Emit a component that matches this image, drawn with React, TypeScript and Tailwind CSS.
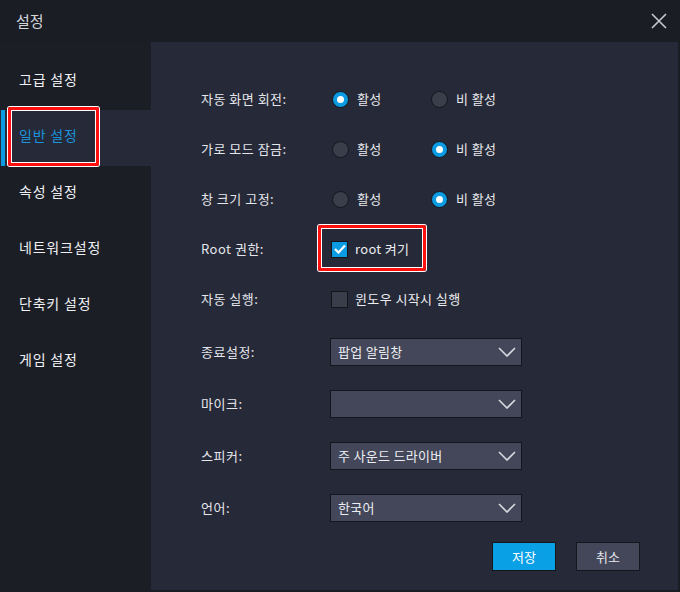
import React from "react";

const font = { fontFamily: '"Noto Sans CJK KR", "Noto Sans", sans-serif' };

function Radio({ on }: { on: boolean }) {
  return on ? (
    <span className="w-[17px] h-[17px] rounded-full bg-[#0a9be3] border border-[#14161c] flex items-center justify-center shrink-0">
      <span className="w-[7px] h-[7px] rounded-full bg-white" />
    </span>
  ) : (
    <span className="w-[17px] h-[17px] rounded-full bg-[#3a3d4a] border border-[#14161c] shrink-0" />
  );
}

function RadioRow({ label, first }: { label: string; first: boolean }) {
  return (
    <div className="h-[50px] flex items-center">
      <div className="w-[131px] text-[13px] tracking-[0.5px] text-[#e4e6ec]">{label}</div>
      <div className="w-[99px] flex items-center gap-[8px]">
        <Radio on={first} />
        <span className="text-[13px] tracking-[0.4px] text-[#e8e9ee]">활성</span>
      </div>
      <div className="flex items-center gap-[8px]">
        <Radio on={!first} />
        <span className="text-[13px] tracking-[0.4px] text-[#e8e9ee]">비 활성</span>
      </div>
    </div>
  );
}

function Chevron() {
  return (
    <svg width="18" height="10" viewBox="0 0 18 10" fill="none">
      <path d="M1 1 L9 9 L17 1" stroke="#d8dae0" strokeWidth="1.6" />
    </svg>
  );
}

function SelectRow({ label, value }: { label: string; value: string }) {
  return (
    <div className="h-[52px] flex items-center">
      <div className="w-[129px] text-[13px] tracking-[0.5px] text-[#e4e6ec]">{label}</div>
      <div className="w-[192px] h-[28px] bg-[#434759] border border-[#14161c] flex items-center justify-between pl-[7px] pr-[5px]">
        <span className="text-[13px] tracking-[0.3px] text-[#eceef2]">{value}</span>
        <Chevron />
      </div>
    </div>
  );
}

export default function App() {
  const items = ["고급 설정", "일반 설정", "속성 설정", "네트워크설정", "단축키 설정", "게임 설정"];
  return (
    <div style={font} className="w-[680px] h-[592px] bg-[#1b1d24] flex flex-col overflow-hidden">
      <div className="h-[42px] flex items-center justify-between pl-[16px] pr-[13px] shrink-0">
        <span className="text-[15px] text-[#d4d6dc]">설정</span>
        <svg width="16" height="16" viewBox="0 0 16 16">
          <path d="M1 1 L15 15 M15 1 L1 15" stroke="#c8cad0" strokeWidth="1.6" />
        </svg>
      </div>
      <div className="flex flex-1">
        <div className="w-[151px] bg-[#1c1e26] pt-[12px] flex flex-col">
          {items.map((t, i) => {
            const sel = i === 1;
            return (
              <div
                key={t}
                className={
                  "relative h-[56px] flex items-center pl-[19px] pb-[6px] text-[14px] tracking-[0.8px] " +
                  (sel ? "bg-[#262937] text-[#1a93dc]" : "text-[#eef0f4]")
                }
              >
                {sel && <span className="absolute left-[1px] top-0 bottom-0 w-[4px] bg-[#0a9be3]" />}
                {sel && (
                  <span className="absolute left-[8px] top-[-3px] w-[91px] h-[59px] border-[3px] border-[#ff1010] rounded-[2px] shadow-[0_0_0_1px_#ffffff,inset_0_0_0_1px_#ffffff]" />
                )}
                {t}
              </div>
            );
          })}
        </div>
        <div className="w-[527px] h-[548px] bg-[#262937] pl-[50px] pt-[32px] flex flex-col">
          <RadioRow label="자동 화면 회전:" first={true} />
          <RadioRow label="가로 모드 잠금:" first={false} />
          <RadioRow label="창 크기 고정:" first={false} />
          <div className="h-[50px] flex items-center">
            <div className="w-[130px] text-[13px] tracking-[0.5px] text-[#e4e6ec]">Root 권한:</div>
            <div className="relative flex items-center gap-[7px]">
              <span className="absolute left-[-13px] top-[-14px] w-[108px] h-[46px] border-[3px] border-[#ff1010] rounded-[2px] shadow-[0_0_0_1px_#ffffff,inset_0_0_0_1px_#ffffff]" />
              <span className="w-[17px] h-[17px] bg-[#0a9be3] border border-[#14161c] flex items-center justify-center">
                <svg width="12" height="10" viewBox="0 0 12 10">
                  <path d="M1 5 L4.5 8.5 L11 1.5" stroke="#fff" strokeWidth="2.2" fill="none" />
                </svg>
              </span>
              <span className="text-[13px] tracking-[0.3px] text-[#eceef2]">root 켜기</span>
            </div>
          </div>
          <div className="h-[50px] flex items-center">
            <div className="w-[130px] text-[13px] tracking-[0.5px] text-[#e4e6ec]">자동 실행:</div>
            <div className="flex items-center gap-[7px]">
              <span className="w-[17px] h-[17px] bg-[#3a3d4a] border border-[#14161c]" />
              <span className="text-[13px] tracking-[0.4px] text-[#eceef2]">윈도우 시작시 실행</span>
            </div>
          </div>
          <div className="mt-[2px]">
            <SelectRow label="종료설정:" value="팝업 알림창" />
            <SelectRow label="마이크:" value="" />
            <SelectRow label="스피커:" value="주 사운드 드라이버" />
            <SelectRow label="언어:" value="한국어" />
          </div>
          <div className="mt-[8px] flex gap-[20px] pl-[291px]">
            <button className="w-[64px] h-[29px] bg-[#0aa0e6] border border-[#14161c] text-[13px] text-white">저장</button>
            <button className="w-[64px] h-[29px] bg-[#434759] border border-[#14161c] text-[13px] text-[#e4e6ec]">취소</button>
          </div>
        </div>
      </div>
    </div>
  );
}
